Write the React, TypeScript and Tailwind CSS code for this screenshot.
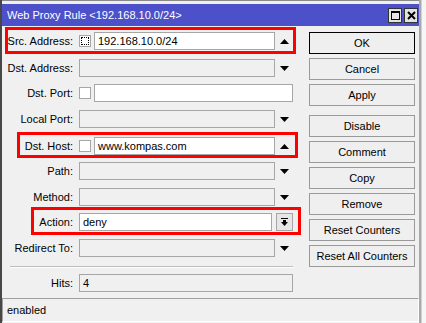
import React from "react";

// small solid triangle used by the combo fields
const Arrow: React.FC<{ up?: boolean }> = ({ up }) => (
  <svg width="9" height="5" viewBox="0 0 9 5" className="shrink-0">
    {up ? <polygon points="0,5 9,5 4.5,0" fill="#000" /> : <polygon points="0,0 9,0 4.5,5" fill="#000" />}
  </svg>
);

type Row = {
  label: string;
  mt: string;
  check?: boolean;
  focus?: boolean;
  value?: string;
  white?: boolean;
  tail: "up" | "down" | "button" | "none";
  box?: string;
};

const rows: Row[] = [
  { label: "Src. Address:", mt: "mt-[6px]", check: true, focus: true, value: "192.168.10.0/24", white: true, tail: "up", box: "left-[3px] right-[13px] top-[-5px] bottom-[-4px]" },
  { label: "Dst. Address:", mt: "mt-[9px]", tail: "down" },
  { label: "Dst. Port:", mt: "mt-[7px]", check: true, white: true, tail: "none" },
  { label: "Local Port:", mt: "mt-[8px]", tail: "down" },
  { label: "Dst. Host:", mt: "mt-[9px]", check: true, value: "www.kompas.com", white: true, tail: "up", box: "left-[15px] right-[11px] top-[-5px] bottom-[-3px]" },
  { label: "Path:", mt: "mt-[7px]", tail: "down" },
  { label: "Method:", mt: "mt-[8px]", tail: "down" },
  { label: "Action:", mt: "mt-[7px]", value: "deny", white: true, tail: "button", box: "left-[29px] right-[8px] top-[-6px] bottom-[-4px]" },
  { label: "Redirect To:", mt: "mt-[8px]", tail: "down" },
];

const buttons: { label: string; mt: string; main?: boolean }[] = [
  { label: "OK", mt: "mt-[6px]", main: true },
  { label: "Cancel", mt: "mt-[4px]" },
  { label: "Apply", mt: "mt-[4px]" },
  { label: "Disable", mt: "mt-[9px]" },
  { label: "Comment", mt: "mt-[4px]" },
  { label: "Copy", mt: "mt-[4px]" },
  { label: "Remove", mt: "mt-[4px]" },
  { label: "Reset Counters", mt: "mt-[4px]" },
  { label: "Reset All Counters", mt: "mt-[4px]" },
];

const FormRow: React.FC<{ row: Row }> = ({ row }) => (
  <div className={`relative flex items-center h-[18px] ${row.mt}`}>
    <div className="w-[71px] text-right whitespace-nowrap">{row.label}</div>
    <div className="ml-[6px] w-[214px] h-full flex items-center">
      {row.check && (
        <div className="w-[12px] h-[12px] mr-[3px] bg-white border border-[#a6a6a6] flex items-center justify-center shrink-0">
          {row.focus && <div className="w-[8px] h-[8px] border border-dotted border-black" />}
        </div>
      )}
      <div
        className={`flex-1 h-full border border-[#a6a6a6] flex items-center pl-[3px] ${row.white ? "bg-white" : "bg-[#f0f0f0]"}`}
      >
        {row.value}
      </div>
      {row.tail === "up" && (
        <div className="w-[18px] flex justify-center">
          <Arrow up />
        </div>
      )}
      {row.tail === "down" && (
        <div className="w-[18px] flex justify-center">
          <Arrow />
        </div>
      )}
      {row.tail === "button" && (
        <div className="ml-[4px] w-[17px] h-full border border-[#a6a6a6] bg-[#e6e6e6] flex items-center justify-center">
          <svg width="7" height="8" viewBox="0 0 7 8">
            <rect x="0" y="0" width="7" height="1" fill="#000" />
            <rect x="2" y="2" width="3" height="2" fill="#000" />
            <polygon points="0,4 7,4 3.5,8" fill="#000" />
          </svg>
        </div>
      )}
    </div>
    {row.box && <div className={`absolute pointer-events-none border-[3px] border-[#ff0000] ${row.box}`} />}
  </div>
);

const App: React.FC = () => {
  return (
    <div className="w-[426px] h-[323px] bg-white flex overflow-hidden font-['Liberation_Sans',Arial,sans-serif] text-[11px] text-black">
      {/* dialog window */}
      <div className="w-[421px] h-[323px] flex flex-col bg-[#f0f0f0] border-l-2 border-l-[#474747] border-r-2 border-r-[#a9a9a9]">
        <div className="h-[4px] border-t border-t-[#8a8a8a]" />
        {/* title bar */}
        <div className="h-[22px] bg-[#4d51c9] flex items-center pl-[5px] pr-[1px]">
          <span className="text-white text-[11px] whitespace-nowrap">Web Proxy Rule &lt;192.168.10.0/24&gt;</span>
          <div className="ml-auto flex gap-[2px]">
            <div className="w-[14px] h-[15px] bg-[#e3e3e3] border border-[#333] flex items-center justify-center">
              <svg width="9" height="9" viewBox="0 0 9 9">
                <rect x="0.5" y="0.5" width="8" height="8" fill="none" stroke="#000" />
                <rect x="0" y="0" width="9" height="2" fill="#000" />
              </svg>
            </div>
            <div className="w-[14px] h-[15px] bg-[#e3e3e3] border border-[#333] flex items-center justify-center">
              <svg width="9" height="9" viewBox="0 0 9 9">
                <path d="M1 1 L8 8 M8 1 L1 8" stroke="#000" strokeWidth="2" />
              </svg>
            </div>
          </div>
        </div>

        <div className="flex flex-1">
          {/* form fields */}
          <div className="w-[307px] flex flex-col">
            {rows.map((r) => (
              <FormRow key={r.label} row={r} />
            ))}
            <div className="mt-[9px] ml-[8px] w-[283px] h-[2px] border-t border-t-[#bdbdbd] border-b border-b-white" />
            <div className="mt-[6px] flex items-center h-[18px]">
              <div className="w-[71px] text-right">Hits:</div>
              <div className="ml-[6px] w-[214px] h-full border border-[#a6a6a6] bg-[#f0f0f0] flex items-center pl-[3px]">4</div>
            </div>
          </div>

          {/* buttons */}
          <div className="w-[106px] flex flex-col">
            {buttons.map((b) => (
              <div
                key={b.label}
                className={`h-[22px] flex items-center justify-center whitespace-nowrap bg-[#efefef] border ${
                  b.main ? "border-black" : "border-[#9a9a9a]"
                } ${b.mt}`}
              >
                {b.label}
              </div>
            ))}
          </div>
        </div>

        {/* status bar */}
        <div className="h-[24px] mb-[1px] flex items-center pl-[4px] border-t border-l border-t-[#a0a0a0] border-l-[#a0a0a0] border-b border-r border-b-white border-r-white">
          enabled
        </div>
      </div>
      <div className="flex-1 bg-[#f6f6f6] border-l border-l-[#d0d0d0]" />
    </div>
  );
};

export default App;
